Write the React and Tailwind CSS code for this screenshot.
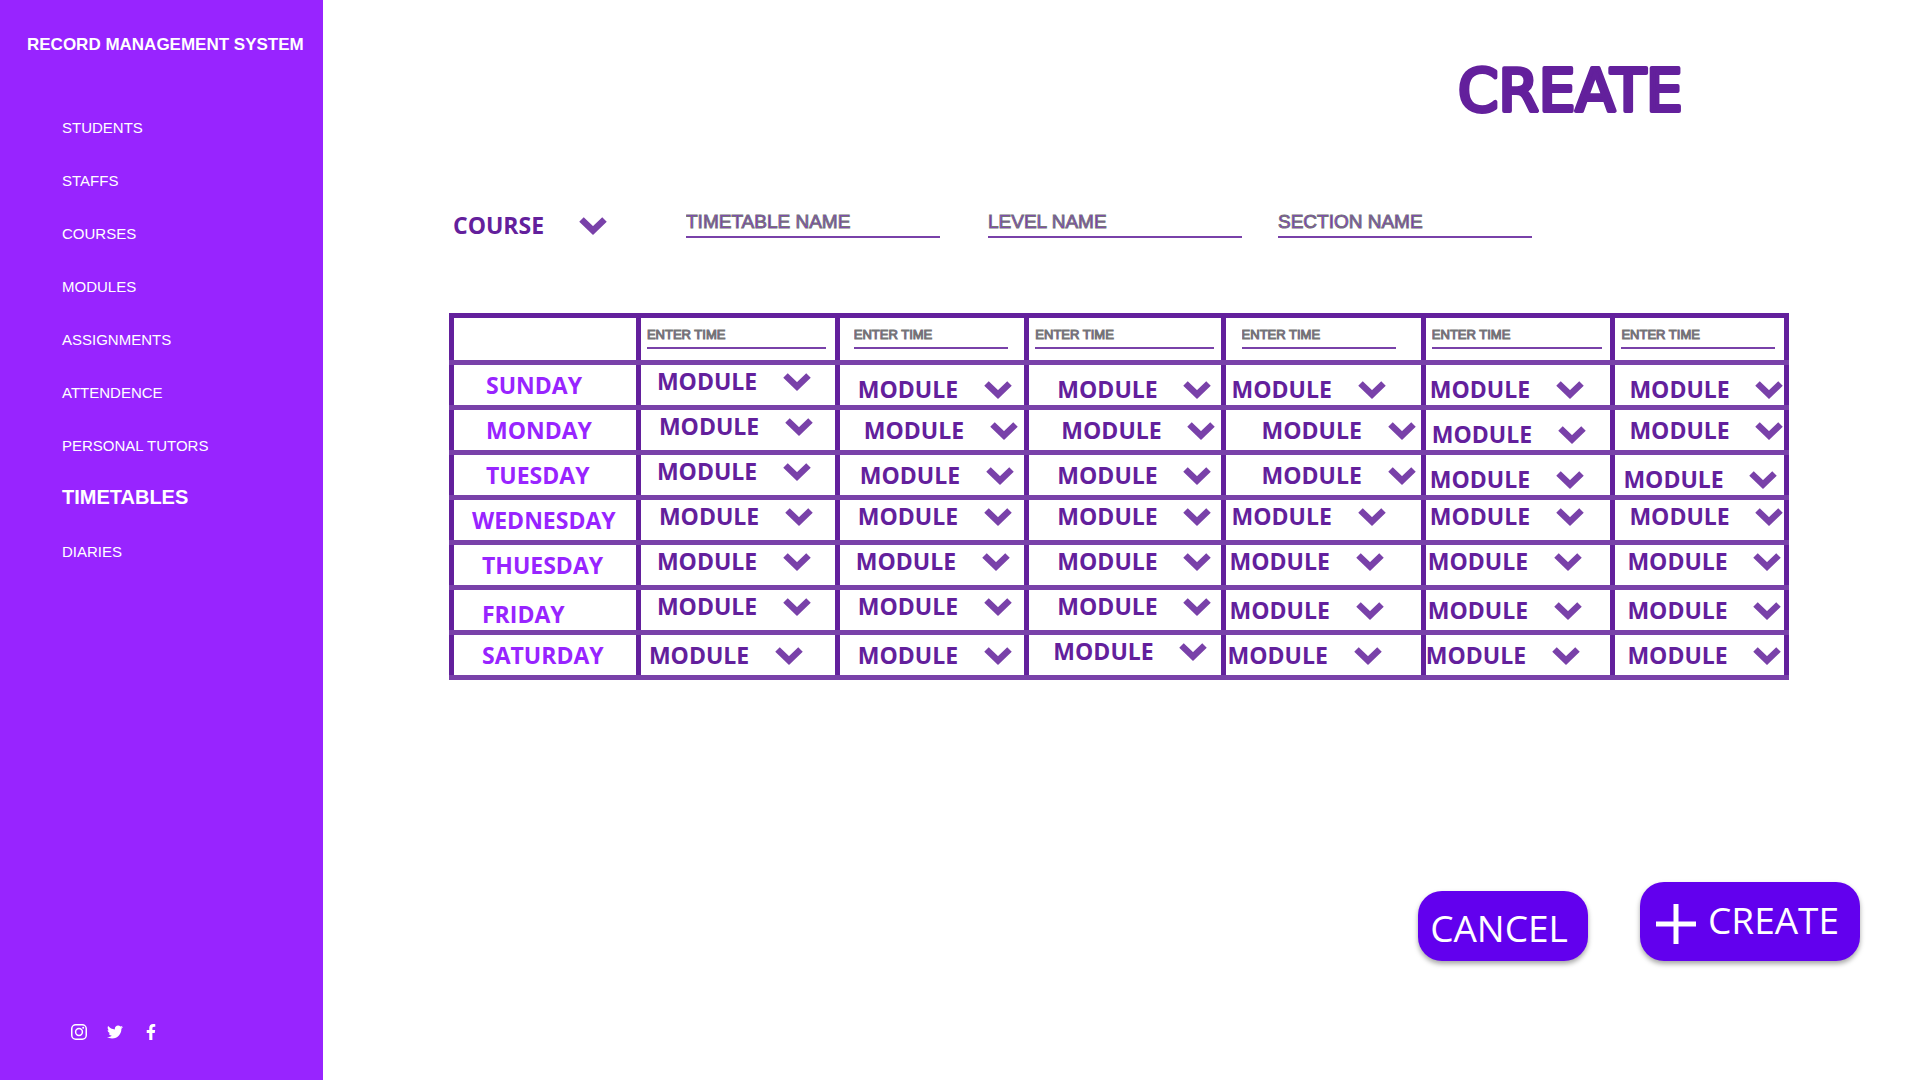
import React from "react";
import { FaTwitter, FaFacebookF } from "react-icons/fa";

const NAV = [
  "STUDENTS",
  "STAFFS",
  "COURSES",
  "MODULES",
  "ASSIGNMENTS",
  "ATTENDENCE",
  "PERSONAL TUTORS",
  "TIMETABLES",
  "DIARIES",
];

// Each cell lists its left padding and vertical alignment.
const ROWS = [
  {
    day: "SUNDAY",
    label: "pl-8",
    cells: ["pl-4 align-top", "pl-4.5 align-bottom", "pl-7 align-bottom", "pl-1.5 align-bottom", "pl-1 align-bottom", "pl-3.5 align-bottom"],
  },
  {
    day: "MONDAY",
    label: "pl-8",
    cells: ["pl-4.5 align-top", "pl-6 align-middle", "pl-8 align-middle", "pl-9 align-middle", "pl-1.5 align-bottom", "pl-3.5 align-middle"],
  },
  {
    day: "TUESDAY",
    label: "pl-8",
    cells: ["pl-4 align-top", "pl-5 align-middle", "pl-7 align-middle", "pl-9 align-middle", "pl-1 align-bottom", "pl-2 align-bottom"],
  },
  {
    day: "WEDNESDAY",
    label: "pl-4.5",
    cells: ["pl-4.5 align-top", "pl-4.5 align-top", "pl-7 align-top", "pl-1.5 align-top", "pl-1 align-top", "pl-3.5 align-top"],
  },
  {
    day: "THUESDAY",
    label: "pl-7",
    cells: ["pl-4 align-top", "pl-4 align-top", "pl-7 align-top", "pl-1 align-top", "pl-0.5 align-top", "pl-3 align-top"],
  },
  {
    day: "FRIDAY",
    label: "pl-7 align-bottom",
    cells: ["pl-4 align-top", "pl-4.5 align-top", "pl-7 align-top", "pl-1 align-middle", "pl-0.5 align-middle", "pl-3 align-middle"],
  },
  {
    day: "SATURDAY",
    label: "pl-7",
    cells: ["pl-2 align-middle", "pl-4.5 align-middle", "pl-6 align-top", "pl-0.5 align-middle", "pl-0 align-middle", "pl-3 align-middle"],
  },
];

const TIME_CELLS = [
  { pad: "pl-1.5", width: "w-[179px]" },
  { pad: "pl-3.5", width: "w-[154px]" },
  { pad: "pl-1.5", width: "w-[179px]" },
  { pad: "pl-4", width: "w-[154px]" },
  { pad: "pl-1.5", width: "w-[170px]" },
  { pad: "pl-1.5", width: "w-[154px]" },
];

const COLUMNS = ["w-[14%]", "w-[14.9%]", "w-[14.2%]", "w-[14.7%]", "w-[15%]", "w-[14.2%]", "w-[13%]"];

const PLACEHOLDER =
  "placeholder:text-[#8a1cf5] placeholder:opacity-100 placeholder:[-webkit-text-stroke:1px_#757575]";

function Picker({ label, text }) {
  return (
    <div className="relative w-[154px]">
      <select
        aria-label={label}
        className="block h-8 w-full cursor-pointer appearance-none bg-transparent p-0 text-[23px] leading-8 font-bold text-[#63209c] outline-none"
      >
        <option>{text}</option>
      </select>
      <svg
        viewBox="0 0 28 18"
        className="pointer-events-none absolute top-2 right-0 h-[18px] w-7"
        fill="none"
        stroke="#7941a9"
        strokeWidth="6.5"
        aria-hidden="true"
      >
        <path d="M2.5 2.5 14 13.5 25.5 2.5" />
      </svg>
    </div>
  );
}

function NameField({ label }) {
  return (
    <input
      type="text"
      aria-label={label}
      placeholder={label}
      className={`block h-[30px] w-[254px] border-b-2 border-[#7941a9] bg-transparent font-['Liberation_Sans',Arial,sans-serif] text-[19px] outline-none ${PLACEHOLDER}`}
    />
  );
}

function Sidebar() {
  return (
    <aside className="flex w-[323px] shrink-0 flex-col bg-[#9824ff] font-['Liberation_Sans',Arial,sans-serif] text-white">
      <h2 className="mt-[33px] pl-[27px] text-[17px] leading-6 font-bold whitespace-nowrap">
        RECORD MANAGEMENT SYSTEM
      </h2>
      <nav className="mt-11 flex flex-col pl-[62px]">
        {NAV.map((item) => (
          <a
            key={item}
            href="#"
            className={
              item === "TIMETABLES"
                ? "flex h-[53px] items-center pb-1 text-[20px] leading-6 font-bold"
                : "flex h-[53px] items-center text-[15px] leading-6"
            }
          >
            {item}
          </a>
        ))}
      </nav>
      <div className="mt-auto flex items-center gap-5 pb-10 pl-[71px]">
        <a href="#" aria-label="Instagram">
          <svg viewBox="0 0 16 16" className="size-4" fill="none" stroke="currentColor" strokeWidth="1.5">
            <rect x="0.75" y="0.75" width="14.5" height="14.5" rx="4" />
            <circle cx="8" cy="8" r="3.4" />
            <circle cx="12.2" cy="3.8" r="1" fill="currentColor" stroke="none" />
          </svg>
        </a>
        <a href="#" aria-label="Twitter">
          <FaTwitter className="size-4" />
        </a>
        <a href="#" aria-label="Facebook">
          <FaFacebookF className="size-4" />
        </a>
      </div>
    </aside>
  );
}

function Timetable() {
  return (
    <table className="w-full table-fixed border-collapse border-5 border-[#63209c]">
      <colgroup>
        {COLUMNS.map((width, i) => (
          <col key={i} className={width} />
        ))}
      </colgroup>
      <thead>
        <tr className="h-[47px]">
          <td className="border-x-5 border-b-5 border-x-[#63209c] border-b-[#7941a9] p-0" />
          {TIME_CELLS.map((cell, i) => (
            <th
              key={i}
              scope="col"
              className={`border-x-5 border-b-5 border-x-[#63209c] border-b-[#7941a9] p-0 pb-1 text-left align-middle font-normal ${cell.pad}`}
            >
              <input
                type="text"
                aria-label={`Time slot ${i + 1}`}
                placeholder="ENTER TIME"
                className={`block h-6 border-b-2 border-[#7941a9] bg-transparent pb-1 font-['Liberation_Sans',Arial,sans-serif] text-[13px] outline-none ${cell.width} ${PLACEHOLDER}`}
              />
            </th>
          ))}
        </tr>
      </thead>
      <tbody>
        {ROWS.map((row) => (
          <tr key={row.day} className="h-[45px]">
            <th
              scope="row"
              className={`border-x-5 border-y-5 border-x-[#63209c] border-y-[#7941a9] py-0 pr-0 text-left text-[23px] leading-8 font-bold text-[#9824ff] ${row.label}`}
            >
              {row.day}
            </th>
            {row.cells.map((cell, i) => (
              <td
                key={i}
                className={`border-x-5 border-y-5 border-x-[#63209c] border-y-[#7941a9] py-0 pr-0 ${cell}`}
              >
                <Picker label={`${row.day} module ${i + 1}`} text="MODULE" />
              </td>
            ))}
          </tr>
        ))}
      </tbody>
    </table>
  );
}

export default function App() {
  return (
    <div className="flex min-h-screen bg-white font-['Open_Sans','Noto_Sans',sans-serif]">
      <Sidebar />
      <main className="flex min-w-0 flex-1 flex-col">
        <h1 className="mt-[50px] mr-[232px] h-20 self-end">
          <svg
            viewBox="0 0 230 80"
            className="h-20 w-[230px] overflow-visible fill-[#63209c] stroke-[#63209c] stroke-4 font-['Comic_Sans_MS','DejaVu_Sans',sans-serif] text-[58px] font-normal [stroke-linejoin:round]"
          >
            <text x="0" y="61">
              CREATE
            </text>
          </svg>
        </h1>

        <div className="mt-[75px] flex items-center pl-[130px]">
          <div className="mt-1">
            <Picker label="COURSE" text="COURSE" />
          </div>
          <div className="ml-[79px] flex">
            <NameField label="TIMETABLE NAME" />
            <div className="mr-9 ml-12">
              <NameField label="LEVEL NAME" />
            </div>
            <NameField label="SECTION NAME" />
          </div>
        </div>

        <div className="mt-[72px] pr-[131px] pl-[126px]">
          <Timetable />
        </div>

        <div className="mt-auto flex items-end justify-end gap-[52px] pr-[60px] pb-[119px] text-[37px] text-white">
          <button
            type="button"
            className="flex h-[70px] w-[170px] items-center justify-center rounded-3xl bg-[#6200ee] pt-1 pr-2 shadow-[0_3px_5px_rgba(0,0,0,0.35)]"
          >
            CANCEL
          </button>
          <button
            type="button"
            className="flex h-[79px] w-[220px] items-center gap-3 rounded-3xl bg-[#6200ee] pb-1 pl-4 shadow-[0_3px_5px_rgba(0,0,0,0.35)]"
          >
            <svg viewBox="0 0 40 40" className="mt-2 size-10" stroke="currentColor" strokeWidth="5" aria-hidden="true">
              <path d="M0 20H40M20 0V40" />
            </svg>
            CREATE
          </button>
        </div>
      </main>
    </div>
  );
}
